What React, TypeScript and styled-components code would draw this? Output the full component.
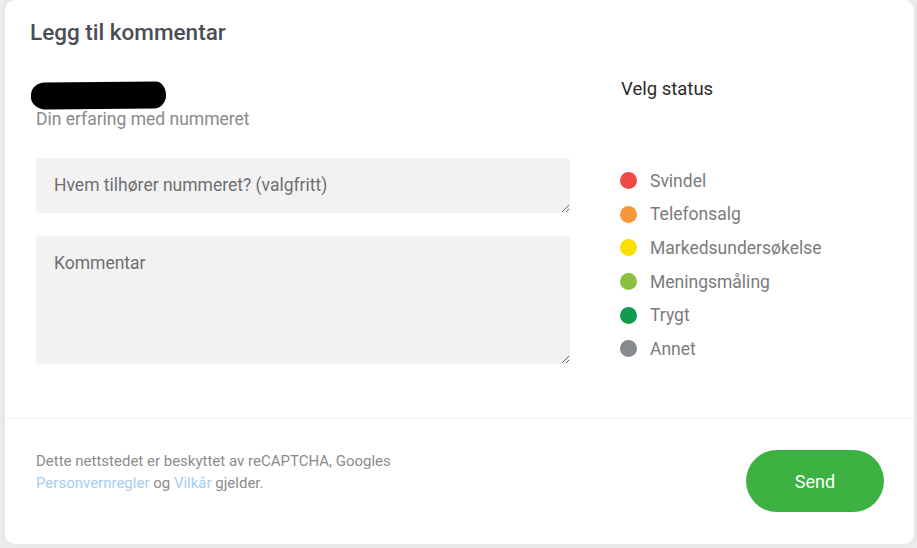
import React from "react";
import styled, { createGlobalStyle } from "styled-components";

const Global = createGlobalStyle`
  html, body { margin: 0; padding: 0; background: #ececec; }
  body { font-family: Roboto, "Noto Sans", Arial, sans-serif; }
  * { box-sizing: border-box; }
`;

const Page = styled.div`
  width: 917px;
  height: 548px;
  padding: 0 3px 4px 5px;
  overflow: hidden;
`;

const Card = styled.div`
  width: 909px;
  height: 544px;
  background: #fff;
  border-radius: 10px;
  box-shadow: 0 0 8px rgba(0, 0, 0, 0.05);
  display: flex;
  flex-direction: column;
`;

const Title = styled.h2`
  margin: 0;
  padding: 19px 0 0 25px;
  font-size: 22.5px;
  line-height: 27px;
  font-weight: 500;
  color: #4a4e54;
`;

const Body = styled.div`
  display: grid;
  grid-template-columns: 534px 1fr;
  column-gap: 50px;
  padding: 33px 31px 0 31px;
  height: 373px;
  border-bottom: 1px solid #efefef;
`;

const LeftCol = styled.div`
  display: flex;
  flex-direction: column;
`;

const Redaction = styled.div`
  width: 135px;
  height: 27px;
  margin: 3px 0 0 -5px;
  background: #000;
  border-radius: 14px 10px 12px 16px / 12px 14px 13px 12px;
  transform: rotate(-0.6deg);
`;

const Label = styled.div`
  margin-top: 0;
  font-size: 17.5px;
  line-height: 20px;
  color: #8a8a8a;
`;

const Field = styled.textarea<{ $h: number; $gap: number }>`
  display: block;
  width: 534px;
  height: ${(p) => p.$h}px;
  margin-top: ${(p) => p.$gap}px;
  padding: 16px 18px;
  border: none;
  border-radius: 4px;
  background: #f3f2f3;
  font-family: Roboto, "Noto Sans", Arial, sans-serif;
  font-size: 17.5px;
  line-height: 22px;
  color: #333;
  resize: vertical;
  outline: none;
  &::placeholder { color: #6f6f72; }
`;

const RightCol = styled.div`
  display: flex;
  flex-direction: column;
`;

const StatusHeading = styled.div`
  font-size: 18.5px;
  line-height: 20px;
  color: #2b2b2b;
  padding-left: 1px;
`;

const StatusList = styled.ul`
  list-style: none;
  margin: 65px 0 0;
  padding: 0;
`;

const StatusItem = styled.li`
  display: flex;
  align-items: center;
  gap: 13px;
  height: 33.6px;
  font-size: 17.5px;
  color: #7b7b7d;
`;

const Dot = styled.span<{ $c: string }>`
  width: 17px;
  height: 17px;
  border-radius: 50%;
  background: ${(p) => p.$c};
  flex: none;
`;

const Footer = styled.div`
  display: flex;
  justify-content: space-between;
  align-items: flex-start;
  padding: 31px 30px 0 31px;
`;

const Notice = styled.p`
  margin: 0;
  font-size: 15px;
  line-height: 22px;
  color: #8c8c8c;
`;

const Link = styled.a`
  color: #a5cdf2;
  text-decoration: none;
`;

const SendButton = styled.button`
  width: 138px;
  height: 62px;
  border: none;
  border-radius: 31px;
  background: #3db142;
  color: #fff;
  font-family: Roboto, "Noto Sans", Arial, sans-serif;
  font-size: 18px;
  cursor: pointer;
`;

const statuses = [
  { label: "Svindel", color: "#f04a47" },
  { label: "Telefonsalg", color: "#f89639" },
  { label: "Markedsundersøkelse", color: "#f8df00" },
  { label: "Meningsmåling", color: "#8cc13f" },
  { label: "Trygt", color: "#109b4e" },
  { label: "Annet", color: "#848a8f" },
];

export default function App() {
  return (
    <Page>
      <Global />
      <Card>
        <Title>Legg til kommentar</Title>
        <Body>
          <LeftCol>
            <Redaction />
            <Label>Din erfaring med nummeret</Label>
            <Field $h={55} $gap={29} placeholder="Hvem tilhører nummeret? (valgfritt)" />
            <Field $h={128} $gap={23} placeholder="Kommentar" />
          </LeftCol>
          <RightCol>
            <StatusHeading>Velg status</StatusHeading>
            <StatusList>
              {statuses.map((s) => (
                <StatusItem key={s.label}>
                  <Dot $c={s.color} />
                  {s.label}
                </StatusItem>
              ))}
            </StatusList>
          </RightCol>
        </Body>
        <Footer>
          <Notice>
            Dette nettstedet er beskyttet av reCAPTCHA, Googles
            <br />
            <Link href="#">Personvernregler</Link> og <Link href="#">Vilkår</Link> gjelder.
          </Notice>
          <SendButton>Send</SendButton>
        </Footer>
      </Card>
    </Page>
  );
}
